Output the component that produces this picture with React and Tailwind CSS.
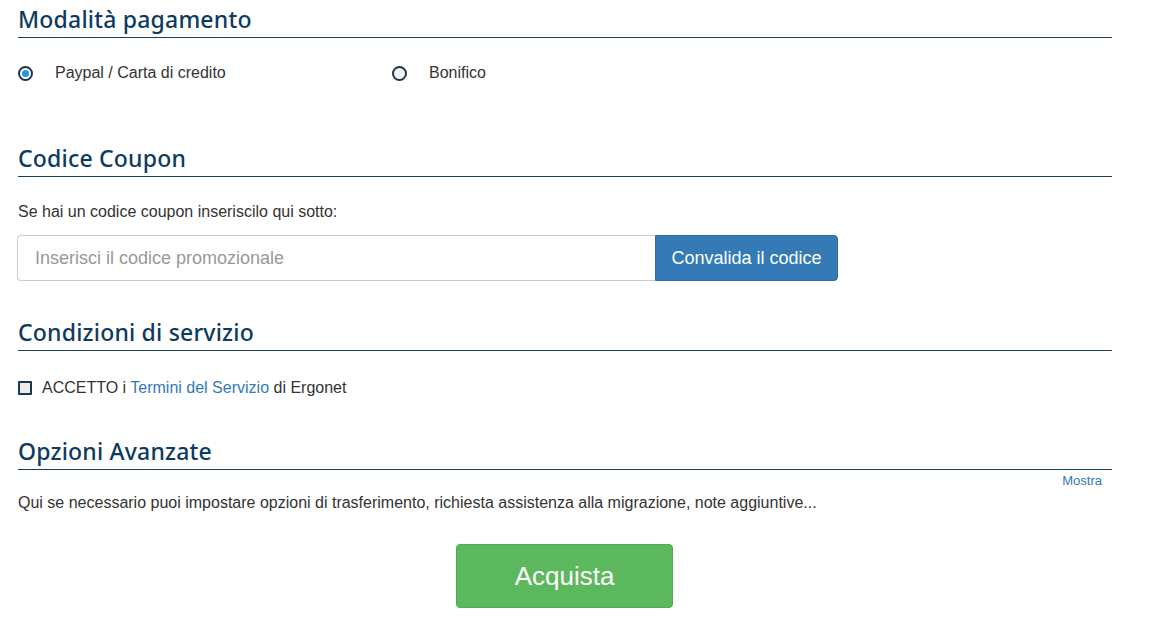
import React from "react";

const headingCls =
  "text-[23px] leading-[28px] font-medium text-[#0d3b5f] border-b border-[#1b3d5a] pb-[4px] tracking-[0.2px]";
const hFont = { fontFamily: '"Noto Sans", sans-serif' };

function Heading({ children, className = "" }) {
  return (
    <h2 className={`${headingCls} ${className}`} style={hFont}>
      {children}
    </h2>
  );
}

export default function App() {
  return (
    <div
      className="w-[1165px] h-[621px] bg-white text-[#333] overflow-hidden"
      style={{ fontFamily: '"Liberation Sans", Arial, sans-serif' }}
    >
      <div className="ml-[18px] w-[1094px] flex flex-col">
        <Heading className="mt-[5px]">Modalità pagamento</Heading>

        <div className="mt-[25px] h-[20px] flex items-center text-[16px]">
          <label className="flex items-center w-[374px]">
            <span className="w-[15px] h-[15px] rounded-full border-2 border-[#1b3553] flex items-center justify-center">
              <span className="w-[7px] h-[7px] rounded-full bg-[#1f9bde]" />
            </span>
            <span className="ml-[22px]">Paypal / Carta di credito</span>
          </label>
          <label className="flex items-center">
            <span className="w-[15px] h-[15px] rounded-full border-2 border-[#1b3553] bg-[#f3f3f3]" />
            <span className="ml-[22px]">Bonifico</span>
          </label>
        </div>

        <Heading className="mt-[61px]">Codice Coupon</Heading>

        <p className="mt-[25px] text-[16px] leading-[20px]">
          Se hai un codice coupon inseriscilo qui sotto:
        </p>

        <div className="mt-[13px] flex w-[821px] h-[46px] -ml-[1px]">
          <div className="flex-1 border border-[#cccccc] border-r-0 rounded-l-[4px] flex items-center pl-[17px] text-[18px] text-[#999]">
            Inserisci il codice promozionale
          </div>
          <button className="w-[183px] bg-[#337ab7] border border-[#2e6da4] text-white text-[18px] rounded-r-[4px] flex items-center justify-center">
            Convalida il codice
          </button>
        </div>

        <Heading className="mt-[37px]">Condizioni di servizio</Heading>

        <label className="mt-[27px] h-[20px] flex items-center text-[16px]">
          <span className="w-[14px] h-[14px] border-2 border-[#1b3553] bg-[#ededed] rounded-[1px]" />
          <span className="ml-[10px]">
            ACCETTO i <span className="text-[#337ab7]">Termini del Servizio</span> di Ergonet
          </span>
        </label>

        <Heading className="mt-[39px]">Opzioni Avanzate</Heading>

        <div className="mt-[3px] h-[16px] flex justify-end pr-[10px] text-[13px] leading-[16px] text-[#337ab7]">
          Mostra
        </div>
        <p className="mt-[4px] text-[16px] leading-[20px]">
          Qui se necessario puoi impostare opzioni di trasferimento, richiesta assistenza alla migrazione, note aggiuntive...
        </p>

        <div className="mt-[31px] flex justify-center">
          <button className="ml-[-1px] w-[217px] h-[64px] bg-[#5cb85c] border border-[#4cae4c] rounded-[4px] text-white text-[26px]">
            Acquista
          </button>
        </div>
      </div>
    </div>
  );
}
